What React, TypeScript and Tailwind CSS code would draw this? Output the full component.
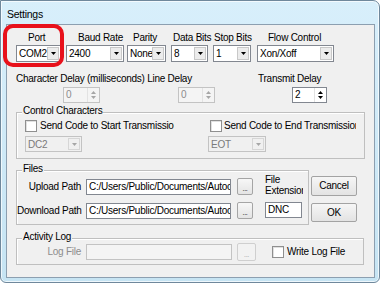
import clsx from "clsx"

const font = "font-['Liberation_Sans',Arial,sans-serif] text-[10px] leading-[12px] tracking-[-0.25px]"

function Arrow({ disabled, up }: { disabled?: boolean; up?: boolean }) {
  return (
    <svg width="5" height="3" viewBox="0 0 5 3">
      <path d={up ? "M2.5 0L5 3H0z" : "M0 0h5L2.5 3z"} fill={disabled ? "#a6a6a6" : "#000"} />
    </svg>
  )
}

function Combo({ value, className, disabled }: { value: string; className: string; disabled?: boolean }) {
  return (
    <div
      className={clsx(
        "flex border p-[1px]",
        disabled ? "border-[#c3c3c3] bg-[#f0f0f0] text-[#7a7a7a]" : "border-[#828790] bg-white text-black",
        className
      )}
    >
      <span className="flex-1 overflow-hidden whitespace-nowrap pl-[1px] leading-[13px]">{value}</span>
      <span
        className={clsx(
          "flex w-[12px] items-center justify-center border",
          disabled ? "border-[#d6d6d6] bg-[#f0f0f0]" : "border-[#c8c8c8] bg-[#ececec]"
        )}
      >
        <Arrow disabled={disabled} />
      </span>
    </div>
  )
}

function Spin({ value, className, disabled }: { value: string; className: string; disabled?: boolean }) {
  return (
    <div
      className={clsx(
        "flex h-[16px] border",
        disabled ? "border-[#c3c3c3] bg-[#f4f4f4] text-[#8c8c8c]" : "border-[#828790] bg-white text-black",
        className
      )}
    >
      <span className="flex-1 pl-[2px] leading-[14px]">{value}</span>
      <span className="flex w-[12px] flex-col items-center justify-center gap-[2px] border-l border-[#e2e2e2]">
        <Arrow up disabled={disabled} />
        <Arrow disabled={disabled} />
      </span>
    </div>
  )
}

function Field({ value, className, disabled }: { value?: string; className: string; disabled?: boolean }) {
  return (
    <div
      className={clsx(
        "h-[16px] overflow-hidden whitespace-nowrap border pl-[2px] leading-[14px]",
        disabled ? "border-[#c3c3c3] bg-[#f4f4f4]" : "border-[#828790] bg-white",
        className
      )}
    >
      {value}
    </div>
  )
}

function Check() {
  return <span className="h-[12px] w-[12px] shrink-0 border border-[#8f8f8f] bg-white shadow-[inset_1px_1px_0_#e0e0e0]" />
}

function Dots({ className, disabled }: { className: string; disabled?: boolean }) {
  return (
    <button
      className={clsx(
        "flex items-end justify-center rounded-[2px] border pb-[2px] text-[7px] leading-[7px]",
        disabled ? "border-[#cfcfcf] bg-[#f2f2f2] text-[#a0a0a0]" : "border-[#a5a5a5] bg-gradient-to-b from-[#f7f7f7] to-[#e4e4e4] text-black",
        className
      )}
    >
      ...
    </button>
  )
}

function Group({ label, className, children }: { label: string; className: string; children: React.ReactNode }) {
  return (
    <div className={clsx("relative border border-[#bfbfbf] shadow-[inset_1px_1px_0_#fff]", className)}>
      <span className="absolute left-[5px] top-[-8px] bg-[#f0f0f0] px-[1px]">{label}</span>
      {children}
    </div>
  )
}

export default function App() {
  return (
    <div className={clsx("relative h-[284px] w-[381px] bg-white text-black", font)}>
      <div className="h-[283px] w-[380px] rounded-tr-[7px] rounded-b-[6px] border border-[#6f889c] bg-gradient-to-b from-[#d8effb] to-[#c6e4f3] shadow-[inset_0_0_0_1px_rgba(255,255,255,0.7)]">
        <div className="h-[23px] pl-[6px] pt-[7px] text-[10.5px]">Settings</div>

        {/* client area */}
        <div className="ml-[5px] h-[254px] w-[369px] border border-[#8c9fb0] bg-[#f0f0f0]">
          <div className="mt-[7px] flex h-[12px] whitespace-nowrap pl-[21px]">
            <span className="w-[50px]">Port</span>
            <span className="w-[55px]">Baud Rate</span>
            <span className="w-[40px]">Parity</span>
            <span className="w-[41px]">Data Bits</span>
            <span className="w-[54px]">Stop Bits</span>
            <span>Flow Control</span>
          </div>

          <div className="mt-[1px] flex h-[17px] pl-[9px]">
            <Combo value="COM2" className="w-[45px]" />
            <Combo value="2400" className="ml-[5px] w-[58px]" />
            <Combo value="None" className="ml-[3px] w-[39px]" />
            <Combo value="8" className="ml-[5px] w-[37px]" />
            <Combo value="1" className="ml-[5px] w-[38px]" />
            <Combo value="Xon/Xoff" className="ml-[6px] w-[77px]" />
          </div>

          <div className="mt-[11px] flex h-[12px] whitespace-nowrap pl-[9px]">
            <span className="w-[242px]">Character Delay (milliseconds) Line Delay</span>
            <span>Transmit Delay</span>
          </div>

          <div className="mt-[2px] flex pl-[56px]">
            <Spin value="0" disabled className="w-[37px]" />
            <Spin value="0" disabled className="ml-[78px] w-[37px]" />
            <Spin value="2" className="ml-[77px] w-[35px]" />
          </div>

          <Group label="Control Characters" className="ml-[9px] mt-[9px] h-[47px] w-[349px]">
            <div className="flex pl-[8px] pt-[6px]">
              <div className="w-[183px]">
                <div className="flex h-[13px] items-center">
                  <Check />
                  <span className="ml-[3px] w-[134px] overflow-hidden whitespace-nowrap">Send Code to Start Transmission</span>
                </div>
                <Combo value="DC2" disabled className="mt-[4px] h-[16px] w-[57px]" />
              </div>
              <div>
                <div className="flex h-[13px] items-center pl-[2px]">
                  <Check />
                  <span className="ml-[2px] w-[132px] overflow-hidden whitespace-nowrap">Send Code to End Transmission</span>
                </div>
                <Combo value="EOT" disabled className="mt-[4px] h-[16px] w-[58px]" />
              </div>
            </div>
          </Group>

          <div className="mt-[11px] flex">
            <Group label="Files" className="ml-[9px] h-[55px] w-[293px]">
              <div className="flex">
                <div className="flex flex-col">
                  <div className="mt-[7px] flex h-[17px] items-center">
                    <span className="w-[64px] text-right">Upload Path</span>
                    <Field value="C:/Users/Public/Documents/Autoc" className="ml-[5px] w-[145px]" />
                    <Dots className="ml-[6px] h-[17px] w-[16px]" />
                  </div>
                  <div className="mt-[7px] flex h-[17px] items-center">
                    <span className="w-[64px] whitespace-nowrap text-right">Download Path</span>
                    <Field value="C:/Users/Public/Documents/Autoc" className="ml-[5px] w-[145px]" />
                    <Dots className="ml-[6px] h-[17px] w-[16px]" />
                  </div>
                </div>
                <div className="ml-[12px] flex flex-col">
                  <div className="mt-[3px] h-[22px] w-[38px] overflow-hidden whitespace-nowrap leading-[11px]">
                    File
                    <br />
                    Extension
                  </div>
                  <Field value="DNC" className="mt-[6px] w-[37px]" />
                </div>
              </div>
            </Group>

            <div className="ml-[2px] flex flex-col">
              <button className="mt-[6px] h-[20px] w-[46px] rounded-[2px] border border-[#a3a3a3] bg-gradient-to-b from-[#f6f6f6] to-[#e3e3e3]">
                Cancel
              </button>
              <button className="mt-[7px] h-[19px] w-[46px] rounded-[2px] border border-[#a3a3a3] bg-gradient-to-b from-[#f6f6f6] to-[#e3e3e3]">
                OK
              </button>
            </div>
          </div>

          <Group label="Activity Log" className="ml-[9px] mt-[13px] h-[27px] w-[348px]">
            <div className="mt-[4px] flex h-[18px] items-center">
              <span className="w-[64px] text-right text-[#8d8d8d]">Log File</span>
              <Field disabled className="ml-[5px] w-[146px]" />
              <Dots disabled className="ml-[5px] h-[18px] w-[19px]" />
              <span className="ml-[16px] flex items-center">
                <Check />
                <span className="ml-[3px]">Write Log File</span>
              </span>
            </div>
          </Group>
        </div>
      </div>

      {/* red highlight round the Port box */}
      <div className="absolute left-[3px] top-[24px] h-[43px] w-[61px] rounded-[10px] border-[4px] border-[#e8111b]" />
    </div>
  )
}
